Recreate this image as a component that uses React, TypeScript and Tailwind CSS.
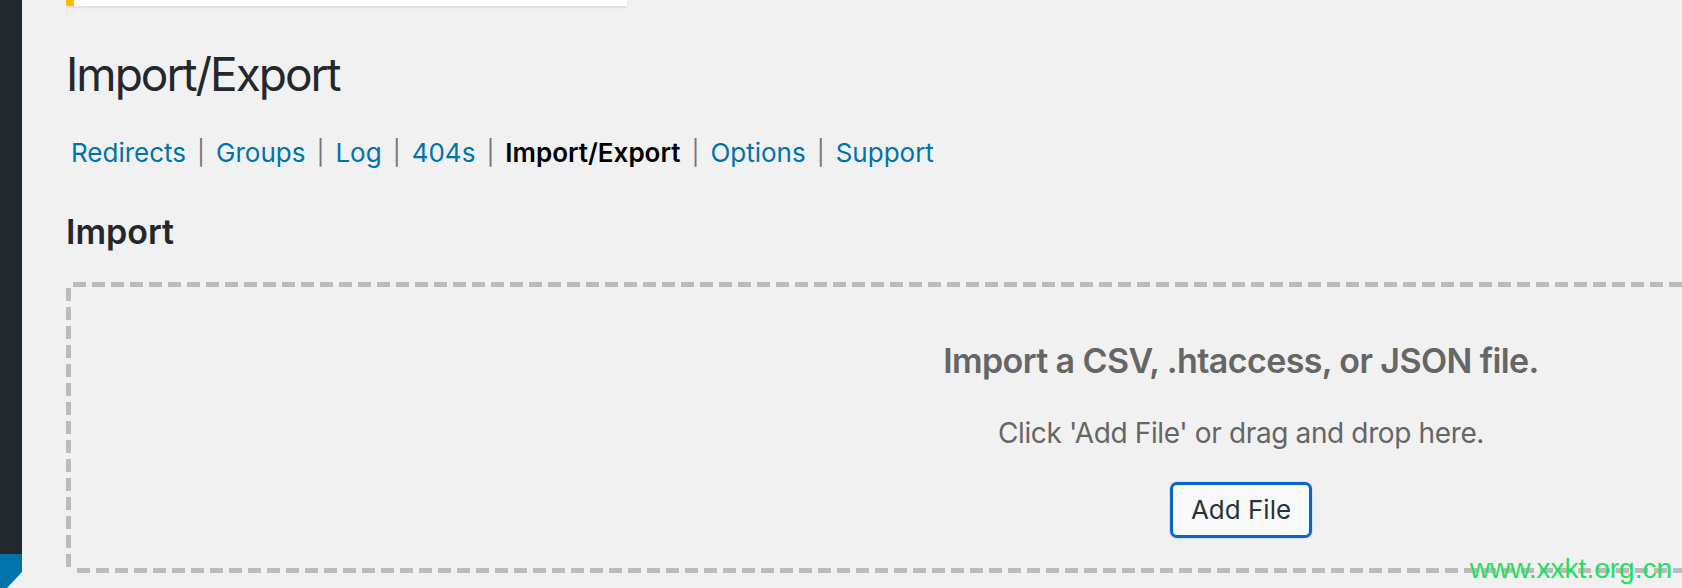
const tabs = [
  { label: "Redirects" },
  { label: "Groups" },
  { label: "Log" },
  { label: "404s" },
  { label: "Import/Export", current: true },
  { label: "Options" },
  { label: "Support" },
];

function SubNav() {
  return (
    <nav className="mt-[35px] flex items-center text-[26px] leading-[32px]">
      {tabs.map((tab, i) => (
        <span key={tab.label} className="flex items-center">
          {i > 0 && <span className="mx-[6px] text-[24px] text-[#72777c]">|</span>}
          <a
            href="#"
            className={
              tab.current
                ? "px-[5px] font-semibold text-black"
                : "px-[5px] text-[#0073aa]"
            }
          >
            {tab.label}
          </a>
        </span>
      ))}
    </nav>
  );
}

export default function App() {
  return (
    <div className="relative flex h-[588px] w-full overflow-hidden bg-[#f1f1f1] font-['Inter',sans-serif]">
      {/* admin menu strip */}
      <aside className="flex w-[22px] shrink-0 flex-col justify-end bg-[#23282d]">
        <div className="relative h-[34px] bg-[#0073aa]">
          <span className="absolute bottom-0 right-0 h-0 w-0 border-b-[16px] border-l-[15px] border-b-[#f1f1f1] border-l-transparent" />
        </div>
      </aside>

      <main className="min-w-0 flex-1 pl-[44px]">
        <div className="h-[6px] w-[561px] border-l-[8px] border-[#ffb900] bg-white shadow-[0_2px_2px_rgba(0,0,0,0.07)]" />

        <h1 className="mt-[40px] text-[46px] leading-[56px] font-normal tracking-[-2px] text-[#23282d]">
          Import/Export
        </h1>

        <SubNav />

        <h2 className="mt-[43px] text-[34px] leading-[40px] font-semibold text-[#23282d]">
          Import
        </h2>

        {/* dropzone, dashed edges drawn as gradients to get the long-dash look */}
        <section className="mt-[30px] w-[2350px] shrink-0 rounded-lg p-[5px] pt-[59px] pb-[35px] text-center text-[#666] [background:repeating-linear-gradient(90deg,#bbb_0_13px,transparent_13px_19px)_7px_0/100%_5px_no-repeat,repeating-linear-gradient(90deg,#bbb_0_13px,transparent_13px_19px)_11px_100%/100%_5px_no-repeat,repeating-linear-gradient(180deg,#bbb_0_13px,transparent_13px_19px)_0_6px/5px_100%_no-repeat]">
          <h3 className="text-[34px] leading-[40px] font-semibold tracking-[-0.6px]">
            Import a CSV, .htaccess, or JSON file.
          </h3>
          <p className="mt-[35px] text-[28px] leading-[34px] tracking-[-0.37px]">
            Click 'Add File' or drag and drop here.
          </p>
          <div className="mt-[32px] flex justify-center">
            <button className="h-[56px] w-[142px] rounded-[7px] border-[3px] border-[#0b63ce] bg-[#f9f9f9] text-[26px] leading-[30px] text-[#2c3338] shadow-[0_0_0_1px_#d3e3f3]">
              Add File
            </button>
          </div>
        </section>
      </main>

      <span className="absolute right-[10px] top-[555px] font-['Liberation_Sans',Arial,sans-serif] text-[28px] leading-[28px] text-[#1fe060]">
        www.xxkt.org.cn
      </span>
    </div>
  );
}
